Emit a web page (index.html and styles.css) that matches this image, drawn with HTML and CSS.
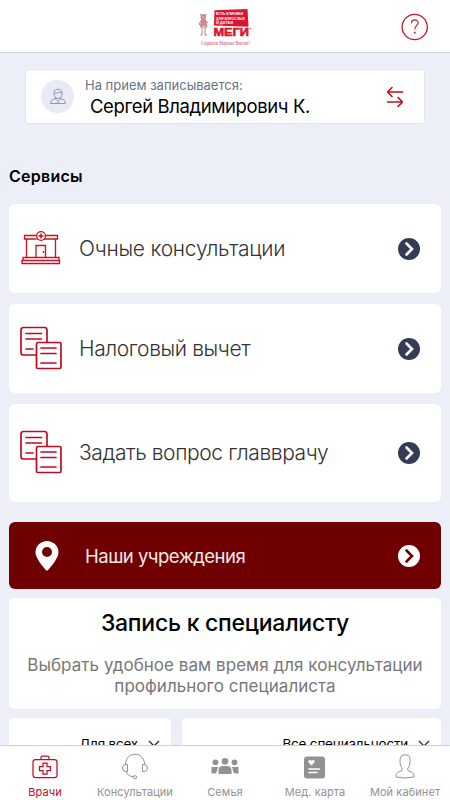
FILE: index.html
```html
<!DOCTYPE html>
<html lang="ru">
<head>
<meta charset="utf-8">
<title>МЕГИ</title>
<link rel="stylesheet" href="styles.css">
</head>
<body>
<svg width="0" height="0" class="defs">
  <symbol id="docs" viewBox="0 0 44 46">
    <g fill="none" stroke="#c20b20" stroke-width="1.700" stroke-linecap="round" stroke-linejoin="round">
      <path d="M17 29H4.500Q2 29 2 26.500V4Q2 1.500 4.500 1.500H25.500Q28 1.500 28 4V16"/>
      <path d="M7 7.500H22.500M7 13H22.500M7 23H14"/>
      <rect x="17.500" y="16.500" width="24.500" height="26" rx="1.500"/>
      <path d="M22 22H37M22 27.500H37M22 37H37"/>
    </g>
  </symbol>
  <symbol id="next" viewBox="0 0 22 22">
    <circle cx="11" cy="11" r="11" fill="currentColor"/>
    <path d="M8.500 5.500L14 11L8.500 16.500" fill="none" stroke="var(--mark)" stroke-width="2.600" stroke-linecap="round"/>
  </symbol>
</svg>

<header class="top">
  <svg class="logo" width="58" height="42" viewBox="0 0 58 42">
    <path d="M16.500 2.300L49.500 1L50.500 18.800L16 17.500Z" fill="#dc1430"/>
    <g class="logo-tag" fill="#fff">
      <text x="18" y="7.200" textLength="27" lengthAdjust="spacingAndGlyphs">ЕСТЬ КЛИНИКИ</text>
      <text x="18" y="11.600" textLength="29" lengthAdjust="spacingAndGlyphs">ДЛЯ ВЗРОСЛЫХ</text>
      <text x="18" y="16" textLength="17" lengthAdjust="spacingAndGlyphs">И ДЕТЕЙ</text>
    </g>
    <text class="logo-name" x="15.500" y="28" textLength="35.500" lengthAdjust="spacingAndGlyphs">МЕГИ</text>
    <circle cx="52" cy="20.500" r=".7" fill="#dc1430"/>
    <text class="logo-slogan" x="3" y="37" textLength="49" lengthAdjust="spacingAndGlyphs">Сохраним Здоровье Вместе!</text>
    <g fill="none" stroke="#a5636a" stroke-width=".8">
      <circle cx="5.300" cy="9" r="2.400" fill="#d9a0a6"/>
      <path d="M2 6L4 8M8.500 6L6.500 8M3.500 12H7.500L9 19H2.500ZM3 13L.8 16L2.500 17M7.500 13L10 15M4 19V27M7 19V27M2.500 27H4M7 27H9"/>
    </g>
    <path d="M3.500 12H7.500L8.200 18H3Z" fill="#cf5662" opacity=".7"/>
  </svg>
  <div class="help">
    <svg width="28" height="28" viewBox="0 0 28 28" fill="none" stroke="#c91126" stroke-width="1.300">
      <circle cx="13.700" cy="14" r="12.600"/>
      <path d="M10.500 10.200C10.500 5.800 17.100 5.800 17.100 9.800C17.100 12.600 13.800 12.500 13.800 16.500" stroke-width="1.100"/>
      <path d="M13.800 18.700V20.400" stroke-width="1.700"/>
    </svg>
  </div>
</header>

<main class="content">
  <section class="patient">
    <span class="avatar">
      <svg width="18" height="17" viewBox="0 0 18 17" fill="none" stroke="#7d82a5" stroke-width=".8">
        <path d="M5 6V4.500C5 .2 13 .2 13 4.500V6C13 8.500 11.200 10.500 9 10.500S5 8.500 5 6ZM5 5Q8 6 10 4L13 5M7 10V11.500L9 13.500L11 11.500V10M7 10.500L3.500 11.500Q2 12.500 1.500 15.500H16.500Q16 12.500 14.500 11.500L11 10.500M9 13.500V15.500"/>
      </svg>
    </span>
    <div class="patient-text">
      <div class="patient-label"><span>На прием записывается:</span></div>
      <div class="patient-name"><span>Сергей Владимирович К.</span></div>
    </div>
    <svg class="swap" width="18" height="22" viewBox="0 0 18 22" fill="none" stroke="#c20d1d" stroke-width="1.600" stroke-linecap="round" stroke-linejoin="round">
      <path d="M16.500 6H1.500M6 1.500L1.500 6L6 10.500M1.500 16H16.500M12 11.500L16.500 16L12 20.500"/>
    </svg>
  </section>

  <h2 class="heading"><span>Сервисы</span></h2>

  <section class="service">
    <svg class="service-icon" width="44" height="46" viewBox="0 0 44 46" fill="none" stroke="#c31225" stroke-width="1.300">
      <path d="M17 9.500H5.500V13H17.500M26.500 9.500H38.500V13H26M7.500 13V31.500M36.500 13V31.500M4 31.500H40V34.500H4ZM3 34.500H40.500V37.500H3ZM17 31.500V19.500H26.500V31.500M24.500 25V27M18 13H26"/>
      <circle cx="22" cy="10" r="4.400" fill="#fff"/>
      <path d="M22 7.500V12.500M19.500 10H24.500" stroke-width="1.500"/>
    </svg>
    <span class="service-name wide">Очные консультации</span>
    <svg class="next" width="22" height="22"><use href="#next"/></svg>
  </section>
  <section class="service">
    <svg class="service-icon" width="44" height="46"><use href="#docs"/></svg>
    <span class="service-name">Налоговый вычет</span>
    <svg class="next" width="22" height="22"><use href="#next"/></svg>
  </section>
  <section class="service tall">
    <svg class="service-icon" width="44" height="46"><use href="#docs"/></svg>
    <span class="service-name">Задать вопрос главврачу</span>
    <svg class="next" width="22" height="22"><use href="#next"/></svg>
  </section>

  <section class="places">
    <svg width="24" height="30" viewBox="0 0 24 30"><path fill="#fff" fill-rule="evenodd" d="M12 0C5.600 0 .5 5 .5 11.200C.5 18.500 12 30 12 30S23.500 18.500 23.500 11.200C23.500 5 18.400 0 12 0ZM12 6A5 5 0 1 1 12 16A5 5 0 0 1 12 6Z"/></svg>
    <span class="places-name">Наши учреждения</span>
    <svg class="next" width="22" height="22"><use href="#next"/></svg>
  </section>

  <section class="booking">
    <h1 class="booking-title"><span>Запись к специалисту</span></h1>
    <p class="booking-text"><span>Выбрать удобное вам время для консультации</span><br><span>профильного специалиста</span></p>
  </section>

  <div class="filters">
    <div class="filter"><span>Для всех</span><svg width="12" height="8" viewBox="0 0 12 8"><path d="M1 1L6 6L11 1"/></svg></div>
    <div class="filter"><span>Все специальности</span><svg width="12" height="8" viewBox="0 0 12 8"><path d="M1 1L6 6L11 1"/></svg></div>
  </div>
</main>

<nav class="tabs">
  <div class="tab active">
    <svg width="28" height="28" viewBox="0 0 28 28" fill="none" stroke="currentColor" stroke-width="1.250">
      <rect x="2" y="6.500" width="24" height="18" rx="2.500"/>
      <path d="M10 6.500V4.500Q10 3 11.500 3H16.500Q18 3 18 4.500V6.500M12 10H16V13.500H19.500V17.500H16V21H12V17.500H8.500V13.500H12Z"/>
    </svg>
    <span>Врачи</span>
  </div>
  <div class="tab">
    <svg width="28" height="28" viewBox="0 0 28 28" fill="none" stroke="currentColor" stroke-width="1">
      <path d="M4.500 11C5 -2 23 -2 23.500 11M6.500 11.500V18.500H5Q1.500 18.500 1.500 15T5 11.500ZM21.500 11.500V18.500H23Q26.500 18.500 26.500 15T23 11.500ZM5.500 18.500Q6 23 12.500 24"/>
      <circle cx="14" cy="24.200" r="1.600"/>
    </svg>
    <span>Консультации</span>
  </div>
  <div class="tab">
    <svg width="28" height="28" viewBox="0 0 28 28" fill="currentColor">
      <circle cx="14" cy="8.300" r="3.300"/><circle cx="4.500" cy="9.300" r="2.900"/><circle cx="23.500" cy="9.300" r="2.900"/>
      <path d="M7.500 21V17.500Q7.500 13 12 13H16Q20.500 13 20.500 17.500V21ZM.5 20.500V14H7.500Q6 15.500 6 18Q5.500 20.500 3.500 20.500ZM27.500 20.500V14H20.500Q22 15.500 22 18Q22.500 20.500 24.500 20.500Z"/>
    </svg>
    <span>Семья</span>
  </div>
  <div class="tab">
    <svg width="28" height="28" viewBox="0 0 28 28">
      <rect x="3" y="3.500" width="21" height="22" rx="3" fill="currentColor"/>
      <path fill="#fff" d="M10.500 12.500L7.800 9.800C6.300 8 8.800 5.700 10.500 7.700C12.200 5.700 14.700 8 13.200 9.800Z"/>
      <path stroke="#fff" stroke-width="1.600" stroke-linecap="round" d="M8 16H18.500M8 19.500H16"/>
    </svg>
    <span>Мед. карта</span>
  </div>
  <div class="tab">
    <svg width="28" height="28" viewBox="0 0 28 28" fill="none" stroke="currentColor" stroke-width="1">
      <path d="M11.500 16C8.500 13 8 4 11 2.500Q14 .8 17.500 2.500C20 4 19.500 13 16.500 16Q16.500 18 19 18.500C22.500 19.500 23 21 23 24Q14 26 5 24C5 21 5.500 19.500 9 18.500Q11.500 18 11.500 16Z"/>
    </svg>
    <span>Мой кабинет</span>
  </div>
</nav>
</body>
</html>
```

FILE: styles.css
```css
* { box-sizing: border-box; }
body {
  margin: 0;
  width: 450px;
  height: 800px;
  display: flex;
  flex-direction: column;
  overflow: hidden;
  background: #eceff8;
  font-family: Inter, "Liberation Sans", sans-serif;
  color: #000;
}
svg { display: block; flex: none; }
span { white-space: nowrap; }
.defs { display: none; }
.top {
  flex: none;
  height: 53px;
  padding: 8px 21px 0 0;
  display: grid;
  grid-template-columns: 198px 1fr auto;
  background: #fff;
  border-bottom: 1px solid #d3d5dc;
}
.logo { grid-column: 2; }
.logo text { font-family: "Liberation Sans", sans-serif; font-weight: 700; }
.logo .logo-tag text { font-size: 4.400px; }
.logo .logo-name { font-size: 11.300px; fill: #dc1430; stroke: #dc1430; stroke-width: .6px; }
.logo .logo-slogan { font-family: "Liberation Serif", serif; font-style: italic; font-weight: 400; font-size: 6px; fill: #d53a4c; }
.help { padding-top: 5px; }
.content { flex: 1; min-height: 0; overflow: hidden; padding: 16px 9px 0; }
.patient {
  display: flex;
  height: 55px;
  margin: 0 16px;
  padding: 2px 20px 0 15px;
  align-items: center;
  background: #fff;
  border: 1px solid #e2e4e9;
  border-radius: 3px;
}
.avatar { width: 33px; height: 33px; margin-bottom: 2px; border-radius: 50%; background: #e8eaf5; display: flex; align-items: center; justify-content: center; }
.patient-text { flex: 1; padding-left: 11px; }
.patient-label { font-size: 13px; line-height: 17px; color: #687582; letter-spacing: 0; }
.patient-name { font-size: 18.500px; line-height: 25px; padding-left: 5px; letter-spacing: -.4px; }
.swap { margin-bottom: 2px; }
.heading { margin: 43px 0 0; font-size: 16px; line-height: 18px; font-weight: 600; letter-spacing: .25px; }
.service, .places { display: flex; align-items: center; padding: 0 21px 0 10px; border-radius: 6px; background: #fff; color: #343b54; --mark: #fff; }
.service { height: 89px; margin-bottom: 11px; }
.heading + .service { margin-top: 19px; }
.service.tall { height: 98px; margin-bottom: 20px; }
.service-name { color: #333; font-size: 21px; font-weight: 350; line-height: 26px; padding-left: 16px; letter-spacing: -.4px; }
.service-name.wide { letter-spacing: -.25px; }
.next { margin-left: auto; }
.places { height: 67px; padding-left: 26px; background: #700000; color: #fff; --mark: #700000; }
.places-name { font-size: 18.500px; line-height: 24px; padding-left: 26px; color: #f3e9e9; letter-spacing: -.5px; }
.booking { height: 111px; margin-top: 9px; padding-top: 10px; border-radius: 5px; background: #fff; text-align: center; }
.booking-title { margin: 0; font-size: 23px; line-height: 30px; font-weight: 500; letter-spacing: -.25px; }
.booking-text { margin: 17px 0 0; font-size: 17px; line-height: 21px; color: #777; letter-spacing: .04px; }
.filters { display: grid; grid-template-columns: 162px 1fr; gap: 11px; margin-top: 9px; }
.filter { height: 51px; display: flex; justify-content: flex-end; align-items: center; gap: 10px; padding-right: 11px; border-radius: 5px; background: #fff; font-size: 13.500px; letter-spacing: -.2px; }
.filter path { fill: none; stroke: #222; stroke-width: 1.300; }
.tabs { flex: none; height: 55px; display: grid; grid-template-columns: repeat(5, 1fr); background: #fff; border-top: 1px solid #cfd0d3; }
.tab { display: flex; flex-direction: column; align-items: center; padding-top: 7px; color: #929292; font-size: 11px; line-height: 16px; letter-spacing: .08px; }
.tab svg { margin-bottom: 3px; }
.tab.active { color: #c20d20; }
```
